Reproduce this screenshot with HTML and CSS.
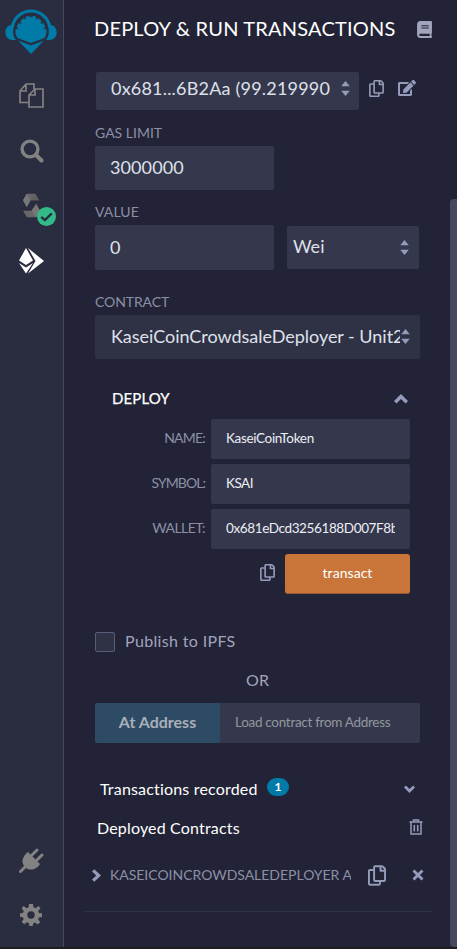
FILE: index.html
```html
<!DOCTYPE html>
<html lang="en">
<head>
<meta charset="utf-8">
<title>Deploy &amp; Run Transactions</title>
<link rel="stylesheet" href="styles.css">
</head>
<body>
<svg class="defs" aria-hidden="true">
  <symbol id="copy" viewBox="0 0 448 512"><path d="M433.941 65.941l-51.882-51.882A48 48 0 0 0 348.118 0H176c-26.51 0-48 21.49-48 48v48H48c-26.51 0-48 21.49-48 48v320c0 26.51 21.49 48 48 48h224c26.51 0 48-21.49 48-48v-48h80c26.51 0 48-21.49 48-48V99.882a48 48 0 0 0-14.059-33.941zM266 464H54a6 6 0 0 1-6-6V150a6 6 0 0 1 6-6h74v224c0 26.51 21.49 48 48 48h96v42a6 6 0 0 1-6 6zm128-96H182a6 6 0 0 1-6-6V54a6 6 0 0 1 6-6h106v88c0 13.255 10.745 24 24 24h88v202a6 6 0 0 1-6 6zm6-256h-64V48h9.632c1.591 0 3.117.632 4.243 1.757l48.368 48.368a6 6 0 0 1 1.757 4.243V112z"/></symbol>
  <symbol id="sort" viewBox="0 0 8 14"><path d="M4 0L8 5H0zM4 14L0 9H8z"/></symbol>
  <symbol id="chev" viewBox="0 0 14 10"><path d="M7 0L14 7L11.600 9.500L7 5L2.400 9.500L0 7z"/></symbol>
</svg>
<div class="app">
  <nav class="rail">
    <svg class="logo" viewBox="0 0 52 46">
      <path d="M7 18C9.500 8 17 2 26 2S42.500 8 45 18" fill="none" stroke="#007aa6" stroke-width="3"/>
      <path d="M9.500 16C3.500 15 .3 19 .3 23.500S3.500 32 11 31C7.500 26.500 7.500 21 9.500 16zM42.500 16c6-1 9.200 3 9.200 7.500S48.500 32 41 31c3.500-4.500 3.500-10 1.500-15z"/>
      <path d="M12.500 29c-2-3-2.500-6-1.700-9l2.900.2-2-2.500 2-3.700 2.800 1-1-3 3-2.800 2.300 1.800-.2-3 3.200-1.300 1.500 2.400.7-2.900 .7 2.900 1.500-2.400 3.200 1.300-.2 3 2.300-1.800 3 2.800-1 3 2.800-1 2 3.700-2 2.500 2.900-.2c.8 3 .3 6-1.700 9L26 34z"/>
      <path d="M13 31.500l13 5L39 31.500 26 45z"/>
    </svg>
    <svg class="files" viewBox="0 0 25 25"><path d="M7 1h8v5M7 1L1 8v11.500h9M7 1v7H1M16 6h8v18H10V12zM16 6v6h-6" fill="none" stroke="#828282" stroke-width="1.700"/></svg>
    <svg class="search" viewBox="0 0 24 24"><circle cx="10" cy="10" r="7.900" fill="none" stroke="#828282" stroke-width="3.400"/><path d="M16 16l5.500 5.500" stroke="#828282" stroke-width="4" stroke-linecap="round"/></svg>
    <div class="compiler">
      <svg class="solidity" viewBox="0 0 18 25"><path d="M4 0h9l4 7H8l-4 7-4-7z" fill="#666"/><path d="M4 0l4 7-4 7-4-7z" fill="#777"/><path d="M13 0l4 7H8z" fill="#606060"/><path d="M14 11l4 7-4 7H4l-4-7h9z" fill="#686868"/><path d="M14 11l4 7-4 7-5-7z" fill="#777"/></svg>
      <svg class="ok" viewBox="0 0 18 18"><circle cx="9" cy="9" r="9" fill="#32ba89"/><path d="M4 9.300l3.500 3.200 6.500-6.500" fill="none" stroke="#2a2c3f" stroke-width="2.200"/></svg>
    </div>
    <svg class="eth" viewBox="0 0 25 26"><path d="M7 0l7 12.500-7 4.500-7-4.500zM0 15l7 4.500 7-4.500-7 10.500zM9 0l16 13L9 25.500 16.500 13z" fill="#fff"/></svg>
    <svg class="plug" viewBox="0 0 25 25"><path d="M1.500 23.500L8 17M13 7l5-5M18 12l5-5" stroke="#828282" stroke-width="3" stroke-linecap="round"/><path d="M9 4l12 12c-3 5-10 8-15 3S4 8 9 4z"/></svg>
    <svg class="gear" viewBox="0 0 22 22"><path fill-rule="evenodd" d="M9 0h4l.5 3.300 2 .9L18.400 2 20.500 4.200 18.200 7l.8 2 3 .3v3.700l-3 .5-.8 2 2.100 2.600-2.500 2.500-2.700-2-2 .8L12.700 22H9.300L8.800 19.100l-2-.8-2.700 2-2.500-2.500 2.100-2.600-.8-2-2.900-.5V9.300l3-.3.8-2L1.600 4.200 3.700 2l2.900 2.200 2-.9zM11 7.300a3.700 3.700 0 1 0 0 7.400 3.700 3.700 0 0 0 0-7.400z"/></svg>
  </nav>

  <main class="panel">
    <header class="head"><h1>DEPLOY &amp; RUN TRANSACTIONS</h1>
      <svg class="book" viewBox="0 0 448 512"><path d="M448 360V24c0-13.300-10.700-24-24-24H96C43 0 0 43 0 96v320c0 53 43 96 96 96h328c13.300 0 24-10.700 24-24v-16c0-7.500-3.500-14.300-8.900-18.700-4.200-15.400-4.200-59.300 0-74.700 5.400-4.300 8.900-11.100 8.900-18.600zM128 134c0-3.300 2.700-6 6-6h212c3.300 0 6 2.700 6 6v20c0 3.300-2.700 6-6 6H134c-3.300 0-6-2.700-6-6v-20zm0 64c0-3.300 2.700-6 6-6h212c3.300 0 6 2.700 6 6v20c0 3.300-2.700 6-6 6H134c-3.300 0-6-2.700-6-6v-20zm253.400 250H96c-17.700 0-32-14.300-32-32 0-17.600 14.400-32 32-32h285.400c-1.900 17.100-1.900 46.900 0 64z"/></svg>
    </header>

    <div class="account">
      <div class="box select acct"><span class="clip a1">0x681...6B2Aa (99.219990</span><svg class="sort"><use href="#sort"/></svg></div>
      <svg class="copy"><use href="#copy"/></svg>
      <svg class="edit" viewBox="0 0 576 512"><path d="M402.600 83.200l90.200 90.200c3.800 3.800 3.800 10 0 13.800L274.400 405.600l-92.800 10.300c-12.400 1.400-22.900-9.100-21.500-21.500l10.300-92.800L388.800 83.200c3.800-3.800 10-3.800 13.800 0zm162-22.900l-48.800-48.800c-15.200-15.200-39.900-15.200-55.200 0l-35.400 35.400c-3.800 3.800-3.800 10 0 13.800l90.200 90.200c3.800 3.800 10 3.800 13.800 0l35.400-35.400c15.200-15.300 15.200-40 0-55.200zM384 346.200V448H64V128h229.800c3.200 0 6.200-1.300 8.500-3.500l40-40c7.600-7.600 2.200-20.500-8.500-20.500H48C21.500 64 0 85.500 0 112v352c0 26.500 21.500 48 48 48h352c26.500 0 48-21.500 48-48V306.200c0-10.700-12.900-16-20.500-8.500l-40 40c-2.200 2.300-3.500 5.300-3.500 8.500z"/></svg>
    </div>

    <label class="label gas-label">GAS LIMIT</label>
    <div class="box field"><span class="num">3000000</span></div>
    <label class="label value-label">VALUE</label>
    <div class="value-row">
      <div class="box field value"><span>0</span></div>
      <div class="box select unit"><span>Wei</span><svg class="sort"><use href="#sort"/></svg></div>
    </div>
    <label class="label contract-label">CONTRACT</label>
    <div class="box select contract"><span class="clip c1">KaseiCoinCrowdsaleDeployer - Unit2</span><svg class="sort"><use href="#sort"/></svg></div>

    <div class="deploy-head"><span class="deploy">DEPLOY</span><svg class="chev-up"><use href="#chev"/></svg></div>
    <div class="args">
      <div class="arg"><label class="l1">NAME:</label><div class="box"><span class="clip n1">KaseiCoinToken</span></div></div>
      <div class="arg"><label class="l2">SYMBOL:</label><div class="box"><span class="clip n2">KSAI</span></div></div>
      <div class="arg"><label class="l3">WALLET:</label><div class="box"><span class="clip n3">0x681eDcd3256188D007F8b</span></div></div>
      <div class="arg"><svg class="copy"><use href="#copy"/></svg><button class="transact">transact</button></div>
    </div>

    <div class="ipfs"><i class="check"></i><span>Publish to IPFS</span></div>
    <div class="or">OR</div>
    <div class="address"><button>At Address</button><div class="load"><span>Load contract from Address</span></div></div>

    <div class="recorded"><span class="rec">Transactions recorded</span><b class="badge">1</b><svg class="chev-down"><use href="#chev"/></svg></div>
    <div class="deployed"><span class="dep">Deployed Contracts</span>
      <svg class="trash" viewBox="0 0 14 16"><path d="M.5 3h13M4.500 3V1h5v2M2 3v12h10V3M5.300 6v6.500M8.700 6v6.500" fill="none" stroke="#959bba" stroke-width="1.500"/></svg>
    </div>
    <div class="instance">
      <svg class="chev-right" viewBox="0 0 10 14"><path d="M2.500 0L10 7l-7.500 7L0 11.500 4.800 7 0 2.500z"/></svg>
      <span class="clip inst">KASEICOINCROWDSALEDEPLOYER A</span>
      <svg class="copy big"><use href="#copy"/></svg>
      <svg class="times" viewBox="0 0 12 12"><path d="M1.500 1.500l9 9M10.500 1.500l-9 9" stroke="#959bba" stroke-width="2.900"/></svg>
    </div>
  </main>
  <div class="scroll"></div>
</div>
</body>
</html>
```
FILE: styles.css
```css
* { box-sizing: border-box; }
body { margin: 0; background: #1f1c20; font-family: Lato, "Open Sans", sans-serif; color: #a2a3bd; }
.defs { position: absolute; width: 0; height: 0; }
svg { display: block; flex: none; fill: #959bba; }
.app { display: flex; width: 457px; height: 949px; overflow: hidden; border-bottom: 2px solid #1f1c20; background: #222336; }
.rail { width: 64px; flex: none; height: 947px; background: #2a2c3f; border-right: 1px solid #444960; display: flex; flex-direction: column; padding-top: 9px; }
.rail svg { fill: #828282; }
.rail .logo { width: 52px; height: 46px; margin-left: 5px; fill: #007aa6; }
.files { width: 25px; height: 25px; margin: 28px 0 0 19px; }
.search { width: 24px; height: 24px; margin: 31px 0 0 20px; }
.compiler { display: flex; margin: 30px 0 0 23px; height: 34px; }
.solidity { width: 17px; height: 25px; }
.ok { width: 19px; height: 19px; margin: 14px 0 0 -3px; }
.eth { width: 25px; height: 26px; margin: 21px 0 0 19px; }
.plug { width: 25px; height: 25px; margin: auto 0 0 19px; }
.gear { width: 22px; height: 22px; margin: 31px 0 21px 20px; }
.panel { width: 386px; flex: none; padding-left: 31px; }
.scroll { width: 7px; height: 748px; margin-top: 199px; background: #444960; border-radius: 4px 0 0 4px; }
.panel span, .panel label, h1, .or { white-space: nowrap; }
.head { display: flex; height: 72px; padding-top: 16px; margin-left: -1px; }
h1 { width: 304px; margin: 0; font-size: 20px; line-height: 24px; font-weight: 400; color: #fff; letter-spacing: .2px; }
.book { width: 15px; height: 17px; margin: 5px 0 0 19px; fill: #a2a3bd; }
.box { display: flex; align-items: center; background: #35384c; border-radius: 2px; color: #dfe1ea; }
.clip { display: block; overflow: hidden; }
.select { justify-content: space-between; }
.sort { width: 9px; height: 15px; }
.account { display: flex; height: 38px; margin-left: 1px; }
.acct { width: 263px; height: 38px; padding: 0 9px 7px 15px; font-size: 18px; }
.acct .sort { margin-top: 2px; }
.a1 { width: 219px; letter-spacing: .2px; }
.copy { width: 15px; height: 17px; }
.account .copy { margin: 8px 0 0 10px; }
.edit { width: 18px; height: 16px; margin: 8px 0 0 14px; }
.label { display: block; font-size: 14px; line-height: 18px; color: #8c90a6; }
.gas-label { margin-top: 14px; }
.contract-label { letter-spacing: -.1px; }
.field { width: 179px; height: 44px; margin-top: 4px; padding: 0 0 2px 15px; font-size: 18px; }
.num { letter-spacing: .1px; }
.value-label { margin-top: 13px; letter-spacing: .1px; }
.value-row { display: flex; align-items: center; height: 45px; margin-top: 4px; }
.value { height: 45px; margin: 0; }
.unit { width: 132px; height: 43px; margin-left: 13px; padding: 0 10px 4px 6px; font-size: 18px; }
.unit .sort { margin-top: 4px; }
.contract-label { margin-top: 23px; }
.contract { width: 325px; height: 44px; margin-top: 4px; padding: 0 10px 3px 16px; background: #2f3145; font-size: 18px; }
.contract .sort { margin-top: 2px; }
.c1 { width: 289px; letter-spacing: -.02px; }
.deploy-head { display: flex; justify-content: space-between; align-items: center; width: 313px; height: 20px; margin: 30px 0 0; padding-left: 17px; }
.deploy { color: #fff; font-size: 15px; -webkit-text-stroke: .25px #fff; margin-top: -2px; letter-spacing: .1px; }
.chev-up { width: 14px; height: 10px; }
.args { display: flex; flex-direction: column; gap: 5px; width: 315px; margin-top: 10px; }
.arg { display: flex; height: 40px; justify-content: flex-end; align-items: center; }
.arg label { margin: -3px 6px 0 0; font-size: 14px; color: #8c90a6; }
.l1 { letter-spacing: -.8px; }
.l2 { letter-spacing: -.95px; }
.l3 { letter-spacing: -.6px; }
.arg .box { width: 199px; height: 40px; padding: 0 15px 2px; font-size: 13.500px; color: #eceef4; }
.arg .clip { width: 169px; flex: none; }
.n1 { letter-spacing: -.33px; }
.n2 { letter-spacing: -.5px; }
.n3 { letter-spacing: -.38px; }
.arg .copy { margin: 0 10px 3px 0; }
button { border: 0; padding: 0; font-family: inherit; }
.transact { width: 125px; height: 40px; border-radius: 3px; background: #c97539; border-bottom: 1px solid #955a34; color: #fff; font-size: 14px; padding-bottom: 2px; letter-spacing: .05px; }
.ipfs { display: flex; height: 20px; align-items: center; margin-top: 38px; font-size: 16px; letter-spacing: .35px; }
.ipfs span { margin-top: -3px; }
.check { width: 20px; height: 20px; border: 1px solid #595c76; border-radius: 2px; background: #2f3145; margin-right: 10px; }
.or { width: 325px; text-align: center; font-size: 16px; line-height: 20px; margin-top: 18px; }
.address { display: flex; width: 325px; height: 40px; margin-top: 13px; border-radius: 2px; overflow: hidden; }
.address button { width: 125px; background: #2e4b66; color: #a9afb8; font-size: 16px; font-weight: 700; padding-bottom: 3px; }
.load { flex: 1; display: flex; align-items: center; padding: 0 0 2px 15px; background: #35384c; color: #92979e; font-size: 13.500px; letter-spacing: -.3px; }
.recorded { display: flex; align-items: center; height: 22px; margin-top: 35px; padding-left: 5px; color: #fff; font-size: 16px; }
.rec { width: 167px; line-height: 22px; letter-spacing: .18px; }
.badge { width: 22px; height: 18px; border-radius: 9px; background: #007aa6; color: #fff; font-size: 12px; line-height: 18px; text-align: center; margin-bottom: 4px; }
.chev-down { width: 11px; height: 8px; margin-left: 115px; transform: rotate(180deg); }
.deployed { display: flex; align-items: center; height: 22px; margin-top: 17px; padding-left: 2px; color: #fff; font-size: 16px; }
.dep { width: 312px; letter-spacing: .17px; margin-top: -2px; }
.trash { width: 14px; height: 16px; margin-bottom: 2px; }
.instance { display: flex; align-items: center; height: 73px; margin-left: -11px; width: 349px; padding-left: 8px; border-bottom: 1px solid #2f3145; }
.chev-right { width: 9px; height: 13px; }
.inst { width: 241px; margin: -2px 0 0 9px; font-size: 14px; color: #8c90a6; letter-spacing: -.02px; }
.big { width: 18px; height: 21px; margin-left: 17px; }
.times { width: 12px; height: 12px; margin-left: 26px; }
```
